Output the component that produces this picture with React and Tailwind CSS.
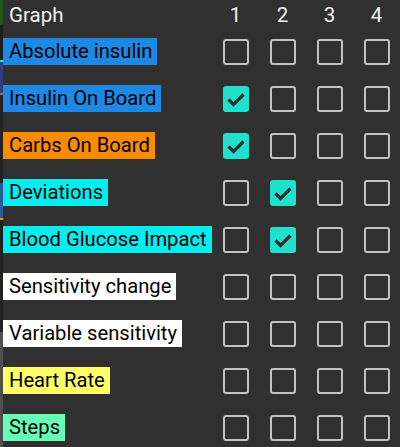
import React from 'react';

const rows = [
  { label: 'Absolute insulin', bg: 'bg-[#1e88e5]', checked: [] },
  { label: 'Insulin On Board', bg: 'bg-[#1e88e5]', checked: [0] },
  { label: 'Carbs On Board', bg: 'bg-[#fb8c00]', checked: [0] },
  { label: 'Deviations', bg: 'bg-[#00eeee]', checked: [1] },
  { label: 'Blood Glucose Impact', bg: 'bg-[#00eeee]', checked: [1] },
  { label: 'Sensitivity change', bg: 'bg-white', checked: [] },
  { label: 'Variable sensitivity', bg: 'bg-white', checked: [] },
  { label: 'Heart Rate', bg: 'bg-[#ffff66]', checked: [] },
  { label: 'Steps', bg: 'bg-[#66ffb8]', checked: [] },
];

function Box({ on }) {
  if (on) {
    return (
      <div className="w-[26px] h-[26px] rounded-[3px] bg-[#1fe0cc] flex items-center justify-center">
        <svg width="26" height="26" viewBox="0 0 26 26">
          <polyline points="5.5,13.5 10.5,18.5 20.5,8.5" fill="none" stroke="#2e2e2e" strokeWidth="3.2" />
        </svg>
      </div>
    );
  }
  return <div className="w-[26px] h-[26px] rounded-[3px] border-[2.5px] border-[#c2c2c2]" />;
}

export default function App() {
  return (
    <div className="flex h-[447px] w-[400px] overflow-hidden bg-[#303030]" style={{ fontFamily: 'Roboto, sans-serif' }}>
      {/* graph peeking behind the dialog */}
      <div className="w-[3px] flex flex-col shrink-0">
        <div className="h-[25px] bg-[#1f5a1a]" />
        <div className="h-[35px] bg-[#1c1c1c]" />
        <div className="h-[2px] bg-[#00e5ff]" />
        <div className="h-[31px] bg-[#2f3f7a]" />
        <div className="h-[2px] bg-[#777]" />
        <div className="h-[88px] bg-[#222]" />
        <div className="h-[35px] bg-[#2a5a9a]" />
        <div className="h-[2px] bg-[#fb8c00]" />
        <div className="h-[112px] bg-[#202020]" />
        <div className="flex-1 bg-[#4f4f4f]" />
      </div>

      <div className="flex-1 flex flex-col">
        <div className="h-[28px] flex shrink-0 text-[20.5px] leading-[24px] text-[#f2f2f2] pt-[3px]">
          <div className="flex-1 pl-[6px]">Graph</div>
          {[1, 2, 3, 4].map(n => (
            <div key={n} className="w-[47px] text-center">{n}</div>
          ))}
        </div>

        {rows.map(r => (
          <div key={r.label} className="h-[47px] flex items-center shrink-0">
            <div className="flex-1 min-w-0">
              <span className={`inline-block whitespace-nowrap h-[27px] leading-[27px] text-[20.2px] text-black pl-[6px] pr-[5px] ${r.bg}`}>
                {r.label}
              </span>
            </div>
            {[0, 1, 2, 3].map(c => (
              <div key={c} className="w-[47px] flex justify-center">
                <Box on={r.checked.includes(c)} />
              </div>
            ))}
          </div>
        ))}
      </div>
    </div>
  );
}
